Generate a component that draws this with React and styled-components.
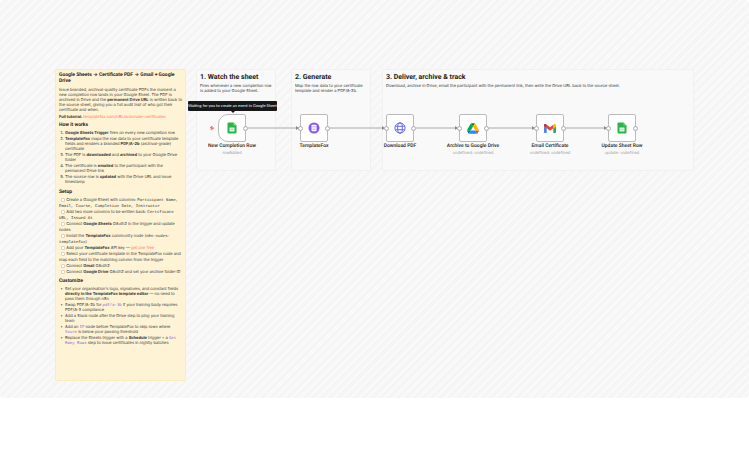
import React from "react";
import styled, { createGlobalStyle, css } from "styled-components";

const nodes = [
  { id: "trigger", x: 218, name: "New Completion Row", sub: "rowAdded", icon: "sheets", trigger: true },
  { id: "fox", x: 300, name: "TemplateFox", icon: "fox" },
  { id: "download", x: 386, name: "Download PDF", icon: "globe" },
  { id: "drive", x: 459, name: "Archive to Google Drive", sub: "undefined: undefined", icon: "drive" },
  { id: "gmail", x: 536, name: "Email Certificate", sub: "undefined: undefined", icon: "gmail" },
  { id: "update", x: 608, name: "Update Sheet Row", sub: "update: undefined", icon: "sheets" },
];

const SheetsIcon = () => (
  <svg viewBox="0 0 24 24" width="12" height="12">
    <path d="M5 1h10l6 6v14a2 2 0 0 1-2 2H5a2 2 0 0 1-2-2V3a2 2 0 0 1 2-2z" fill="#28b446" />
    <path d="M15 1l6 6h-6z" fill="#7fd891" />
    <path d="M7 11h10v8H7z" fill="#e4f7e8" />
    <path d="M7 15h10M12 11v8" stroke="#8fdb9f" strokeWidth="1" />
  </svg>
);

const FoxIcon = () => (
  <svg viewBox="0 0 24 24" width="12" height="12">
    <circle cx="12" cy="12" r="11" fill="#8458f0" />
    <rect x="7" y="5.5" width="10" height="13" rx="1.5" fill="#fff" />
    <path d="M9 9h6M9 12h6M9 15h6" stroke="#a98bf5" strokeWidth="1.2" />
  </svg>
);

const GlobeIcon = () => (
  <svg viewBox="0 0 24 24" width="12" height="12" fill="none" stroke="#5a5af0" strokeWidth="1.8">
    <circle cx="12" cy="12" r="10.2" />
    <ellipse cx="12" cy="12" rx="4.8" ry="10.2" />
    <path d="M2.5 8.5h19M2.5 15.5h19" />
  </svg>
);

const DriveIcon = () => (
  <svg viewBox="0 0 87.3 78" width="12" height="11">
    <path d="M6.6 66.85l3.85 6.65c.8 1.4 1.95 2.5 3.3 3.3L27.5 53H0c0 1.55.4 3.1 1.2 4.5z" fill="#0066da" />
    <path d="M43.65 25L29.9 1.2c-1.35.8-2.5 1.9-3.3 3.3L1.2 48.5C.4 49.9 0 51.45 0 53h27.5z" fill="#00ac47" />
    <path d="M73.55 76.8c1.35-.8 2.5-1.9 3.3-3.3l9.25-16c.8-1.4 1.2-2.95 1.2-4.5H59.8l5.85 11.5z" fill="#ea4335" />
    <path d="M43.65 25L57.4 1.2C56.05.4 54.5 0 52.9 0H34.4c-1.6 0-3.15.45-4.5 1.2z" fill="#00832d" />
    <path d="M59.8 53H27.5L13.75 76.8c1.35.8 2.9 1.2 4.5 1.2h50.8c1.6 0 3.15-.45 4.5-1.2z" fill="#2684fc" />
    <path d="M73.4 26.5L60.7 4.5c-.8-1.4-1.95-2.5-3.3-3.3L43.65 25 59.8 53h27.45c0-1.55-.4-3.1-1.2-4.5z" fill="#ffba00" />
  </svg>
);

const GmailIcon = () => (
  <svg viewBox="52 42 88 66" width="12" height="9">
    <path fill="#4285f4" d="M58 108h14V74L52 59v43c0 3.32 2.69 6 6 6" />
    <path fill="#34a853" d="M120 108h14c3.32 0 6-2.69 6-6V59l-20 15" />
    <path fill="#fbbc04" d="M120 48v26l20-15v-8c0-7.42-8.47-11.65-14.4-7.2" />
    <path fill="#ea4335" d="M72 74V48l24 18 24-18v26L96 92" />
    <path fill="#c5221f" d="M52 51v8l20 15V48l-5.6-4.2c-5.94-4.45-14.4-.22-14.4 7.2" />
  </svg>
);

const icons = {
  sheets: SheetsIcon,
  fox: FoxIcon,
  globe: GlobeIcon,
  drive: DriveIcon,
  gmail: GmailIcon,
};

const Connections = () => (
  <Wires width="749" height="398" viewBox="0 0 749 398">
    {nodes.slice(1).map((node, i) => (
      <g key={node.id}>
        <path d={`M${nodes[i].x + 30} 128H${node.x - 2}`} stroke="#aaa" strokeWidth="1" />
        <path d={`M${node.x - 4} 126l3 2-3 2z`} fill="#8c8c8c" />
      </g>
    ))}
    <path d="M212 126l-2 2h2l-1 2 3-2h-2z" fill="#ff6f5c" stroke="#ff6f5c" strokeWidth=".8" />
  </Wires>
);

const WorkflowNode = ({ node }) => {
  const Icon = icons[node.icon];
  return (
    <Node $x={node.x}>
      <NodeBox type="button" aria-label={node.name} $trigger={node.trigger}>
        <Icon />
      </NodeBox>
      {!node.trigger && <Port $side="left" />}
      <Port $side="right" />
      <NodeName>{node.name}</NodeName>
      {node.sub && <NodeSub>{node.sub}</NodeSub>}
    </Node>
  );
};

const Task = ({ children }) => (
  <TaskLabel>
    <TaskBox type="checkbox" /> {children}
  </TaskLabel>
);

const Guide = () => (
  <GuideNote>
    <GuideTitle>
      Google Sheets → Certificate PDF → Gmail + Google
      <br />
      Drive
    </GuideTitle>
    <Text>
      Issue branded, archival-quality certificate PDFs the moment a
      <br />
      new completion row lands in your Google Sheet. The PDF is
      <br />
      archived in Drive and the <b>permanent Drive URL</b> is written back to
      <br />
      the source sheet, giving you a full audit trail of who got their
      <br />
      certificate and when.
    </Text>
    <Text>
      <b>Full tutorial:</b> <TextLink href="#tutorial">templatefox.com/n8n/automate-certificates</TextLink>
    </Text>
    <GuideHeading>How it works</GuideHeading>
    <Steps>
      <li>
        <b>Google Sheets Trigger</b> fires on every new completion row
      </li>
      <li>
        <b>TemplateFox</b> maps the row data to your certificate template
        <br />
        fields and renders a branded <b>PDF/A-2b</b> (archival-grade)
        <br />
        certificate
      </li>
      <li>
        The PDF is <b>downloaded</b> and <b>archived</b> to your Google Drive
        <br />
        folder
      </li>
      <li>
        The certificate is <b>emailed</b> to the participant with the
        <br />
        permanent Drive link
      </li>
      <li>
        The source row is <b>updated</b> with the Drive URL and issue
        <br />
        timestamp
      </li>
    </Steps>
    <GuideHeading>Setup</GuideHeading>
    <Tasks>
      <Task>
        Create a Google Sheet with columns: <Code>Participant Name,</Code>
        <br />
        <Code>Email, Course, Completion Date, Instructor</Code>
      </Task>
      <Task>
        Add two more columns to be written back: <Code>Certificate</Code>
        <br />
        <Code>URL, Issued At</Code>
      </Task>
      <Task>
        Connect <b>Google Sheets</b> OAuth2 in the trigger and update
        <br />
        nodes
      </Task>
      <Task>
        Install the <b>TemplateFox</b> community node (<Code>n8n-nodes-</Code>
        <br />
        <Code>templatefox</Code>)
      </Task>
      <Task>
        Add your <b>TemplateFox</b> API key — <TextLink href="#key">get one free</TextLink>
      </Task>
      <Task>
        Select your certificate template in the TemplateFox node and
        <br />
        map each field to the matching column from the trigger
      </Task>
      <Task>
        Connect <b>Gmail</b> OAuth2
      </Task>
      <Task>
        Connect <b>Google Drive</b> OAuth2 and set your archive folder ID
      </Task>
    </Tasks>
    <GuideHeading>Customize</GuideHeading>
    <Tips>
      <li>
        Set your organisation's logo, signatures, and constant fields
        <br />
        <b>directly in the TemplateFox template editor</b> — no need to
        <br />
        pass them through n8n
      </li>
      <li>
        Swap PDF/A-2b for <Code $accent>pdf/a-3b</Code> if your training body requires
        <br />
        PDF/A-3 compliance
      </li>
      <li>
        Add a Slack node after the Drive step to ping your training
        <br />
        team
      </li>
      <li>
        Add an <Code $accent>IF</Code> node before TemplateFox to skip rows where
        <br />
        <Code $accent>Score</Code> is below your passing threshold
      </li>
      <li>
        Replace the Sheets trigger with a <b>Schedule</b> trigger + a <Code $accent>Get</Code>
        <br />
        <Code $accent>Many Rows</Code> step to issue certificates in nightly batches
      </li>
    </Tips>
  </GuideNote>
);

const App = () => {
  return (
    <>
      <GlobalStyle />
      <Canvas>
        <Guide />
        <Section $x={196} $width={80}>
          <SectionTitle>1. Watch the sheet</SectionTitle>
          <Text>
            Fires whenever a new completion row
            <br />
            is added to your Google Sheet.
          </Text>
        </Section>
        <Section $x={291} $width={80}>
          <SectionTitle>2. Generate</SectionTitle>
          <Text>
            Map the row data to your certificate
            <br />
            template and render a PDF/A-2b.
          </Text>
        </Section>
        <Section $x={382} $width={312}>
          <SectionTitle>3. Deliver, archive &amp; track</SectionTitle>
          <Text>
            Download, archive in Drive, email the participant with the permanent link, then write the Drive URL back to
            the source sheet.
          </Text>
        </Section>
        <Connections />
        {nodes.map((node) => (
          <WorkflowNode key={node.id} node={node} />
        ))}
        <Tooltip role="tooltip">Waiting for you to create an event in Google Sheets</Tooltip>
      </Canvas>
    </>
  );
};

const GlobalStyle = createGlobalStyle`
  body {
    margin: 0;
    background: #fff;
    color: #333;
    font-family: Inter, sans-serif;
    font-size: 4px;
    line-height: 5px;
    text-rendering: geometricPrecision;
  }

  * {
    box-sizing: border-box;
  }
`;

const Canvas = styled.main`
  position: relative;
  height: 398px;
  overflow: hidden;
  border-radius: 4px;
  background: repeating-linear-gradient(135deg, #f9f9f9 0 3px, #f5f5f5 3px 6px);
`;

const note = css`
  position: absolute;
  top: 69px;
  padding: 3px;
  border: 1px solid #f1f1f1;
  border-radius: 1px;
  background: #f9f9f9;
  white-space: nowrap;
`;

const heading = css`
  color: #222;
  font-family: Roboto, Inter, sans-serif;
  font-weight: 700;
`;

const GuideNote = styled.article`
  ${note}
  left: 55px;
  width: 131px;
  height: 312px;
  padding-top: 2px;
  border-color: #fbecc0;
  background: #fff3d6;
`;

const GuideTitle = styled.h1`
  ${heading}
  margin: 0 0 3px;
  font-size: 5px;
  line-height: 6px;
`;

const GuideHeading = styled.h2`
  ${heading}
  margin: 3px 0 2px;
  font-size: 5px;
  line-height: 6px;
`;

const Section = styled.section`
  ${note}
  left: ${(props) => props.$x}px;
  width: ${(props) => props.$width}px;
  height: 102px;
`;

const SectionTitle = styled.h2`
  ${heading}
  margin: 0 0 2px;
  font-size: 7px;
  line-height: 8px;
`;

const Text = styled.p`
  margin: 0 0 2px;
`;

const TextLink = styled.a`
  color: #ff6f5c;
  text-decoration: none;
`;

/* zero line height keeps the mono font from stretching its line */
const Code = styled.code`
  color: ${(props) => (props.$accent ? "#7a62d8" : "inherit")};
  font-family: "Liberation Mono", monospace;
  font-size: 4px;
  line-height: 0;
`;

const Steps = styled.ol`
  display: grid;
  gap: 1px;
  margin: 0;
  padding: 0 0 2px 6px;
`;

const Tips = styled(Steps).attrs({ as: "ul" })`
  list-style-type: "•  ";
`;

const Tasks = styled.div`
  line-height: 6px;
`;

const TaskLabel = styled.label`
  display: block;
`;

const TaskBox = styled.input`
  appearance: none;
  width: 4px;
  height: 4px;
  margin: 0 0 1px 2px;
  border: 1px solid #d8d3c6;
  border-radius: 1px;
  background: #fff;
  vertical-align: bottom;
`;

const Wires = styled.svg`
  position: absolute;
  top: 0;
  left: 0;
`;

const Node = styled.div`
  position: absolute;
  top: 114px;
  left: ${(props) => props.$x}px;
  display: flex;
  flex-direction: column;
  align-items: center;
  width: 28px;
  white-space: nowrap;
`;

const NodeBox = styled.button`
  display: flex;
  align-items: center;
  justify-content: center;
  width: 28px;
  height: 28px;
  padding: 0;
  border: 1px solid #bbb;
  border-radius: ${(props) => (props.$trigger ? "10px 2px 2px 10px" : "2px")};
  background: #fff;
`;

const Port = styled.span`
  position: absolute;
  top: 12px;
  ${(props) => props.$side}: -2px;
  width: 5px;
  height: 5px;
  border: 1px solid #aaa;
  border-radius: 50%;
  background: #fff;
`;

const NodeName = styled.span`
  margin-top: 1px;
  color: #222;
  font-family: Roboto, sans-serif;
  font-size: 5px;
  font-weight: 500;
  line-height: 6px;
`;

const NodeSub = styled.span`
  color: #999;
  line-height: 8px;
`;

const Tooltip = styled.div`
  position: absolute;
  top: 101px;
  left: 188px;
  width: 89px;
  border-radius: 1px;
  background: #171717;
  color: #fff;
  font-family: Lato, sans-serif;
  line-height: 10px;
  text-align: center;
  white-space: nowrap;

  &::after {
    content: "";
    position: absolute;
    top: 10px;
    left: 43px;
    border: 2px solid transparent;
    border-top-color: #171717;
    border-bottom: 0;
  }
`;

export default App;
